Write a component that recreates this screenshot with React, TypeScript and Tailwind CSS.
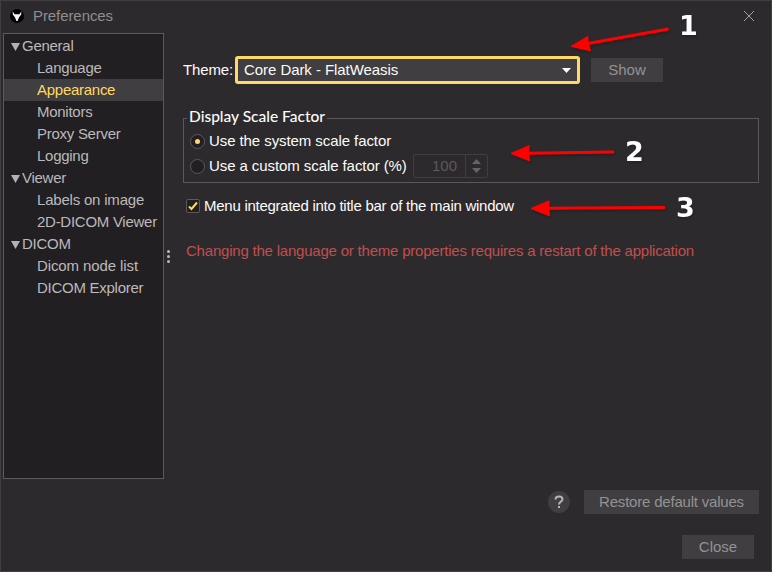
import React from "react";

type Node = { label: string; children: string[] };

const tree: Node[] = [
  { label: "General", children: ["Language", "Appearance", "Monitors", "Proxy Server", "Logging"] },
  { label: "Viewer", children: ["Labels on image", "2D-DICOM Viewer"] },
  { label: "DICOM", children: ["Dicom node list", "DICOM Explorer"] },
];

const itemStyle: Record<string, string> = {
  Appearance: "bg-[#403e41] text-[#ffd866]",
  "Labels on image": "tracking-[-0.2px]",
  "Dicom node list": "tracking-[-0.1px]",
};

function TitleBar() {
  return (
    <header className="flex h-8 shrink-0 items-center pb-[2px] pl-[9px] pr-[17px]">
      <svg width="14" height="14" viewBox="0 0 14 14" className="mr-[9px]">
        <circle cx="7" cy="7" r="7" fill="#000" />
        <path d="M2.600 2.200 4.600 5.200h4.800l2-3-.3 3.600-2 2.400L7.600 12H6.400L4.900 8.200 2.900 5.800Z" fill="#f4f4f4" />
      </svg>
      <span className="tracking-[-0.08px] text-[#8f8d8f]">Preferences</span>
      <svg width="10" height="10" viewBox="0 0 10 10" className="ml-auto" stroke="#a3a2a3" strokeWidth="1">
        <path d="M0 0 10 10M10 0 0 10" />
      </svg>
    </header>
  );
}

function Sidebar() {
  return (
    <nav className="h-[446px] w-[161px] shrink-0 border border-[#5b595c] bg-[#221f22] pt-px tracking-[-0.27px] text-[#bbb9bb]">
      {tree.map((group) => (
        <div key={group.label}>
          <div className="flex h-[22px] items-center pl-[7px]">
            <svg width="9" height="8" viewBox="0 0 9 8" className="mt-0.5 mr-[2px]" fill="#b4b2b4">
              <path d="M0 0h9L4.500 8Z" />
            </svg>
            <span>{group.label}</span>
          </div>
          {group.children.map((item) => (
            <div
              key={item}
              className={"flex h-[22px] items-center pl-[33px] whitespace-nowrap " + (itemStyle[item] ?? "")}
            >
              {item}
            </div>
          ))}
        </div>
      ))}
    </nav>
  );
}

function Radio({ checked }: { checked?: boolean }) {
  return (
    <span className="flex size-[15px] shrink-0 items-center justify-center rounded-full border border-[#5b595c] bg-[#221f22]">
      {checked && <span className="size-[5px] rounded-full bg-[#ffd866]" />}
    </span>
  );
}

function Spinner() {
  return (
    <div className="flex h-6 w-[75px] rounded-[2px] border border-[#403e41]">
      <span className="flex flex-1 items-center justify-end border-r border-[#403e41] pr-2 text-[#5b595c]">100</span>
      <span className="flex w-[21px] items-center justify-center">
        <svg width="9" height="14" viewBox="0 0 9 14" fill="#656366">
          <path d="M0 5 4.500 0 9 5ZM0 9h9L4.500 14Z" />
        </svg>
      </span>
    </div>
  );
}

function Button({ children, className }: { children: string; className: string }) {
  return (
    <button className={"flex h-6 items-center justify-center bg-[#403e41] whitespace-nowrap text-[#939293] " + className}>
      {children}
    </button>
  );
}

function Annotations() {
  return (
    <svg width="772" height="572" viewBox="0 0 772 572" className="pointer-events-none absolute -top-px -left-px">
      <g className="drop-shadow-[1px_2px_1px_rgba(0,0,0,0.2)]" fill="#f00" stroke="#f00" strokeLinejoin="round" strokeLinecap="round">
        <path d="M588 43.500 667.300 29.300" strokeWidth="3" />
        <path d="M571.700 46.300 587.700 36.800 588 43.500 590.200 50.500Z" strokeWidth="1.400" />
        <path d="M528 153.300 612.800 152" strokeWidth="3" />
        <path d="M511.700 153.500 529 146 528.300 153.300 529.500 160.500Z" strokeWidth="1.400" />
        <path d="M548 208.300 663.800 207.500" strokeWidth="3" />
        <path d="M531.700 208.500 549 201.200 548.300 208.500 549.500 215.700Z" strokeWidth="1.400" />
      </g>
      <g className="font-['DejaVu_Sans'] text-[27px] font-bold drop-shadow-[1px_2px_1px_rgba(0,0,0,0.2)]" fill="#fff">
        <text x="679" y="35">1</text>
        <text x="625" y="161">2</text>
        <text x="676" y="217">3</text>
      </g>
    </svg>
  );
}

export default function App() {
  return (
    <div className="relative flex h-[572px] w-[772px] flex-col overflow-hidden border border-[#403e41] bg-[#2d2a2e] font-['Liberation_Sans',sans-serif] text-[15px] leading-[22px] text-[#fcfcfa]">
      <TitleBar />
      <div className="flex h-[446px] shrink-0 pl-[2px]">
        <Sidebar />
        <div className="flex w-[9px] flex-col items-center justify-center gap-[2px]">
          {[0, 1, 2].map((i) => (
            <span key={i} className="size-[3px] rounded-full bg-[#bbb9bb]" />
          ))}
        </div>
        <main className="flex flex-1 flex-col pt-[23px] pr-3 pl-[10px]">
          <div className="flex h-7 items-center">
            <span className="w-[52px] tracking-[-0.15px] whitespace-nowrap">Theme:</span>
            <div className="flex h-7 w-[345px] items-center rounded-[3px] border-3 border-[#ffd866] bg-[#403e41] pr-[6px] pl-[6px]">
              <span className="tracking-[-0.06px]">Core Dark - FlatWeasis</span>
              <svg width="9" height="5" viewBox="0 0 9 5" className="ml-auto" fill="#fcfcfa">
                <path d="M0 0h9L4.500 5Z" />
              </svg>
            </div>
            <Button className="ml-[11px] w-[72px]">Show</Button>
          </div>
          <fieldset className="mt-[23px] h-[76px] border border-[#5b595c] pl-[6px]">
            <legend className="-ml-[3px] h-[22px] w-[140px] pl-[2px] font-['Lato'] text-[15.5px] leading-[19px] font-medium whitespace-nowrap">
              Display Scale Factor
            </legend>
            <div className="flex h-6 items-center gap-1">
              <Radio checked />
              <span className="tracking-[-0.08px]">Use the system scale factor</span>
            </div>
            <div className="mt-px flex h-6 items-center gap-1">
              <Radio />
              <span className="w-[200px] tracking-[-0.08px] whitespace-nowrap">Use a custom scale factor (%)</span>
              <Spinner />
            </div>
          </fieldset>
          <div className="mt-3 flex h-[22px] items-center gap-1 pl-[3px]">
            <span className="flex size-[14px] items-center justify-center rounded-[2px] border border-[#5b595c] bg-[#221f22]">
              <svg width="10" height="10" viewBox="0 0 10 10" fill="none" stroke="#ffd866" strokeWidth="2">
                <path d="M1 5.500 3.500 8 9 1.500" />
              </svg>
            </span>
            <span className="tracking-[-0.26px]">Menu integrated into title bar of the main window</span>
          </div>
          <p className="mt-[23px] pl-[3px] tracking-[-0.21px] whitespace-nowrap text-[#c04f4d]">
            Changing the language or theme properties requires a restart of the application
          </p>
        </main>
      </div>
      <footer className="flex flex-col items-end pt-[11px]">
        <div className="flex items-center pr-3">
          <span className="mr-[14px] flex size-[22px] items-center justify-center rounded-full bg-[#403e41]">
            <svg width="10" height="14" viewBox="0 0 10 14" fill="none" stroke="#b5b3b5" strokeWidth="2">
              <path d="M1.500 4.500C1.500 2.500 3 1.500 5 1.500S8.500 2.700 8.500 4.300C8.500 6.500 5 6.800 5 9.500M5 11v2" />
            </svg>
          </span>
          <Button className="w-[175px] tracking-[-0.2px]">Restore default values</Button>
        </div>
        <Button className="mt-[21px] mr-[17px] w-[72px]">Close</Button>
      </footer>
      <Annotations />
    </div>
  );
}
